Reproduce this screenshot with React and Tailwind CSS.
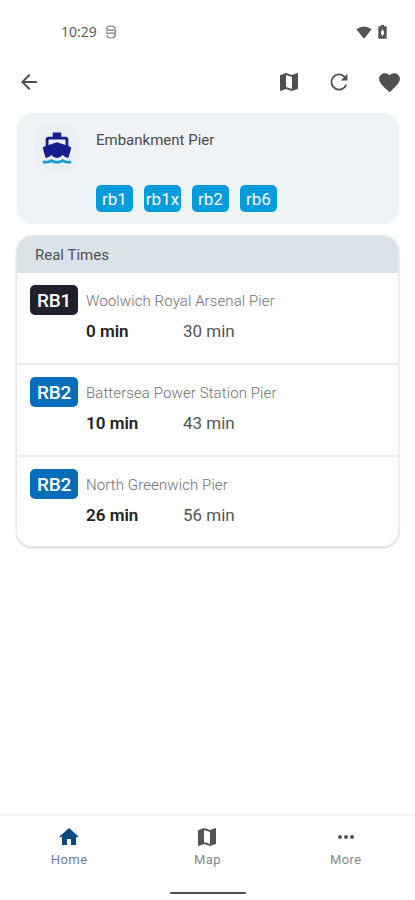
import { MdArrowBack, MdFavorite, MdHome, MdMap, MdMoreHoriz } from 'react-icons/md'

const lines = ['rb1', 'rb1x', 'rb2', 'rb6']

const departures = [
  { line: 'RB1', to: 'Woolwich Royal Arsenal Pier', next: '0 min', later: '30 min', bg: 'bg-[#1f1f2d]' },
  { line: 'RB2', to: 'Battersea Power Station Pier', next: '10 min', later: '43 min', bg: 'bg-[#066dbb]' },
  { line: 'RB2', to: 'North Greenwich Pier', next: '26 min', later: '56 min', bg: 'bg-[#066dbb]' },
]

function BoatIcon() {
  return (
    <svg viewBox="0 0 24 24" className="w-[34px] h-[34px]">
      <path
        fill="#151f8c"
        d="M3.95 19H4c1.6 0 3.02-.88 4-2 .98 1.12 2.4 2 4 2s3.02-.88 4-2c.98 1.12 2.4 2 4 2h.05l1.89-6.68c.08-.26.06-.54-.06-.78s-.34-.42-.6-.5L20 10.62V6c0-1.1-.9-2-2-2h-3V1H9v3H6c-1.1 0-2 .9-2 2v4.62l-1.29.42c-.26.08-.48.26-.6.5s-.15.52-.06.78L3.95 19zM6 6h12v3.97L12 8 6 9.97V6z"
      />
      <path
        fill="#159bd7"
        d="M20 21c-1.39 0-2.78-.47-4-1.32-2.44 1.71-5.56 1.71-8 0C6.78 20.53 5.39 21 4 21H2v2h2c1.38 0 2.74-.35 4-.99 2.52 1.29 5.48 1.29 8 0 1.26.65 2.62.99 4 .99h2v-2h-2z"
      />
    </svg>
  )
}

function RefreshIcon() {
  return (
    <svg viewBox="0 0 24 24" className="w-6 h-6 ml-[26px]">
      <path fill="none" stroke="currentColor" strokeWidth="1.8" d="M19.200 14.600A7.600 7.600 0 1 1 17.600 6.800" />
      <path fill="currentColor" d="M20.400 3.800V10.400H13.800Z" />
    </svg>
  )
}

function StatusBar() {
  return (
    <div className="h-16 pl-[61px] pr-[28px] flex items-center text-[#555]">
      <span className="font-['Open_Sans',sans-serif] text-[14px] leading-none">10:29</span>
      <svg viewBox="0 0 12 14" className="w-3 h-3.5 ml-2" fill="none" stroke="#777" strokeWidth="1.2">
        <path d="M10.3 3.8Q9.6 1 6 1Q1.7 1 1.700 3.800Q1.700 5.200 3.500 5.200H10.800M1 8.200H8.500Q10.300 8.200 10.300 10Q10.300 13 6 13Q2.300 13 1.700 10.400M1.700 5.200V6.500M10.300 5.200V8.500" />
      </svg>
      <svg viewBox="0 0 16 13" className="w-4 h-[13px] ml-auto" fill="#555">
        <path d="M0.300 3.300Q8-2.300 15.700 3.300L8 12.800Z" />
      </svg>
      <svg viewBox="0 0 9 14" className="w-[9px] h-3.5 ml-1.5" fill="#555" fillRule="evenodd">
        <path d="M3 0H6V1.300H8Q8.700 1.300 8.700 2V13Q8.700 13.700 8 13.700H1Q.3 13.700 .3 13V2Q.3 1.300 1 1.300H3ZM4.500 4L3 7V8.500L4.500 11.200L6 8.500V7Z" />
      </svg>
    </div>
  )
}

function StopCard() {
  return (
    <div className="ml-[17px] mr-[16px] h-[111px] rounded-2xl bg-[#eff3f6] flex pt-3 pl-[17px]">
      <div className="w-[45px] h-[45px] rounded-[14px] bg-[#e9eff3] flex items-center justify-center">
        <BoatIcon />
      </div>
      <div className="ml-[17px] pt-1">
        <h1 className="text-[15px] leading-[22px] text-[#4a4a4a]">Embankment Pier</h1>
        <div className="flex gap-[11px] mt-[34px]">
          {lines.map(line => (
            <span key={line} className="w-[37px] h-[27px] rounded-[5px] bg-[#029cdc] text-white text-[17px] leading-[28px] flex justify-center">
              {line}
            </span>
          ))}
        </div>
      </div>
    </div>
  )
}

function Departure({ item }) {
  return (
    <div className="h-[92px] pt-3 pl-[13px] flex border-b-2 border-[#ebebeb] last:border-b-0">
      <span className={`w-12 h-[30px] rounded-[5px] text-white text-[19px] leading-[31px] tracking-[-0.200px] font-medium text-center ${item.bg}`}>
        {item.line}
      </span>
      <div className="ml-2 pt-1">
        <p className="text-[15px] leading-[24px] tracking-[0.100px] text-[#707070] font-light whitespace-nowrap">{item.to}</p>
        <div className="flex mt-[7px] text-[17px] leading-[22px]">
          <span className="w-[97px] font-semibold text-[#222]">{item.next}</span>
          <span className="text-[#555]">{item.later}</span>
        </div>
      </div>
    </div>
  )
}

function Tab({ icon: Icon, label, color, text }) {
  return (
    <div className={`flex-1 flex flex-col items-center ${color}`}>
      <Icon className="w-6 h-6" />
      <span className={`text-[13px] leading-4 mt-[3px] tracking-[0.400px] ${text}`}>{label}</span>
    </div>
  )
}

export default function App() {
  return (
    <div className="w-[415px] h-[900px] bg-white flex flex-col overflow-hidden font-[Roboto,sans-serif]">
      <StatusBar />
      <header className="h-[49px] pl-[17px] pr-[13px] pb-[13px] flex items-center text-[#505050]">
        <MdArrowBack className="w-6 h-6" />
        <MdMap className="w-6 h-6 ml-auto" />
        <RefreshIcon />
        <MdFavorite className="w-[25px] h-[25px] ml-[26px]" />
      </header>
      <StopCard />
      <section className="ml-4 mr-4 mt-[11px] h-[312px] shrink-0 rounded-2xl overflow-hidden border border-[#e9e9e9] shadow-[0_1px_2px_rgba(0,0,0,0.22)]">
        <h2 className="h-[37px] pl-[18px] bg-[#dae3e8] text-[15px] leading-[38px] text-[#4b5358]">Real Times</h2>
        {departures.map(item => (
          <Departure key={item.to} item={item} />
        ))}
      </section>
      <nav className="mt-auto h-[86px] border-t-2 border-[#f7f7f7] flex flex-col">
        <div className="flex pt-[9px]">
          <Tab icon={MdHome} label="Home" color="text-[#054884]" text="text-[#6580a0]" />
          <Tab icon={MdMap} label="Map" color="text-[#555]" text="text-[#888]" />
          <Tab icon={MdMoreHoriz} label="More" color="text-[#555]" text="text-[#888]" />
        </div>
        <div className="mx-auto mt-auto mb-[6px] w-[76px] h-[2px] rounded-full bg-[#505050]"></div>
      </nav>
    </div>
  )
}
